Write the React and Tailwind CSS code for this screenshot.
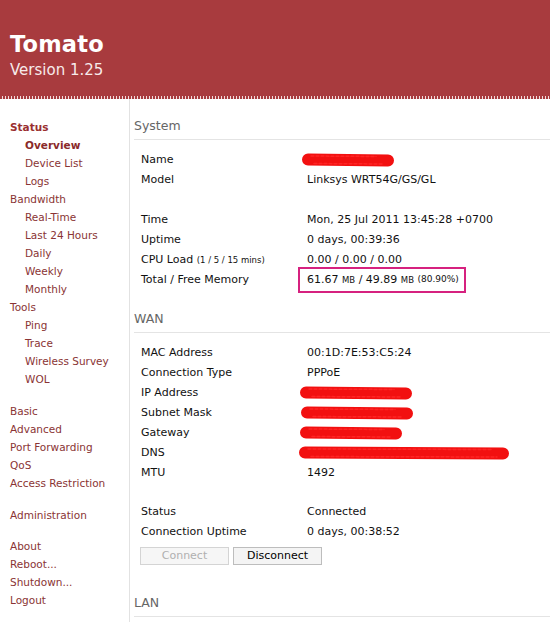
import React from "react";

const F = { fontFamily: '"DejaVu Sans", Verdana, sans-serif' };

function Redact({ w, dx = -6 }) {
  return (
    <svg width={w} height="14" viewBox={`0 0 ${w} 14`} style={{ marginLeft: dx }} className="block">
      <path d={`M6 6.5 L${w - 6} 7.5`} fill="none" stroke="#f21010" strokeWidth="12" strokeLinecap="round" />
      <path d={`M9 3 L${w - 18} 3.5 M12 10.5 L${w - 12} 11`} fill="none" stroke="#ff2424" strokeWidth="1.5" strokeLinecap="round" strokeDasharray="3 2" />
    </svg>
  );
}

function Row({ label, children }) {
  return (
    <div className="flex h-[20px] items-center">
      <div className="w-[166px] shrink-0">{label}</div>
      <div className="flex items-center">{children}</div>
    </div>
  );
}

function Heading({ children, className = "" }) {
  return (
    <div className={"border-b border-[#e4e4e4] pb-[5px] text-[12.5px] leading-[16px] text-[#666] " + className}>
      {children}
    </div>
  );
}

function SideLink({ children, sub, bold, active }) {
  return (
    <div
      className={
        "h-[18px] leading-[18px] " +
        (sub ? "pl-[15px] " : "") +
        (active ? "font-bold text-[#8a2a2a] " : bold ? "font-bold text-[#9a2f2f] " : "text-[#8a3434] ")
      }
    >
      {children}
    </div>
  );
}

export default function App() {
  return (
    <div className="w-[550px] h-[622px] overflow-hidden bg-white" style={F}>
      <div className="h-[96px] bg-[#a83b3e] pl-[10px] pt-[30px] text-white">
        <div className="text-[22.5px] font-bold leading-[28px] tracking-[0.2px]">Tomato</div>
        <div className="mt-[3px] text-[15px] leading-[18px] text-[#f7eaea]">Version 1.25</div>
      </div>
      <div className="h-[3px] bg-[repeating-linear-gradient(90deg,#a83b3e_0_2px,#f2dcdc_2px_3px)]" />
      <div className="flex">
        <div className="w-[130px] shrink-0 border-r border-[#e2e2e2] pl-[10px] pt-[19px] text-[10.5px] h-[523px]">
          <SideLink bold>Status</SideLink>
          <SideLink sub active>Overview</SideLink>
          <SideLink sub>Device List</SideLink>
          <SideLink sub>Logs</SideLink>
          <SideLink>Bandwidth</SideLink>
          <SideLink sub>Real-Time</SideLink>
          <SideLink sub>Last 24 Hours</SideLink>
          <SideLink sub>Daily</SideLink>
          <SideLink sub>Weekly</SideLink>
          <SideLink sub>Monthly</SideLink>
          <SideLink>Tools</SideLink>
          <SideLink sub>Ping</SideLink>
          <SideLink sub>Trace</SideLink>
          <SideLink sub>Wireless Survey</SideLink>
          <SideLink sub>WOL</SideLink>
          <div className="h-[14px]" />
          <SideLink>Basic</SideLink>
          <SideLink>Advanced</SideLink>
          <SideLink>Port Forwarding</SideLink>
          <SideLink>QoS</SideLink>
          <SideLink>Access Restriction</SideLink>
          <div className="h-[14px]" />
          <SideLink>Administration</SideLink>
          <div className="h-[13px]" />
          <SideLink>About</SideLink>
          <SideLink>Reboot...</SideLink>
          <SideLink>Shutdown...</SideLink>
          <SideLink>Logout</SideLink>
        </div>
        <div className="flex-1 pl-[4px] pt-[19px] text-[11px] text-[#111]">
          <Heading>System</Heading>
          <div className="pl-[7px] pt-[10px]">
            <Row label="Name"><Redact w={92} dx={-5} /></Row>
            <Row label="Model">Linksys WRT54G/GS/GL</Row>
            <div className="h-[20px]" />
            <Row label="Time">Mon, 25 Jul 2011 13:45:28 +0700</Row>
            <Row label="Uptime">0 days, 00:39:36</Row>
            <Row label={<span>CPU Load <span className="text-[8.5px]">(1 / 5 / 15 mins)</span></span>}>0.00 / 0.00 / 0.00</Row>
            <Row label="Total / Free Memory">
              <span className="-my-[3px] -ml-[9px] inline-flex h-[26px] items-center border-2 border-[#d6217f] pl-[7px] pr-[5px]">
                61.67&nbsp;<span className="text-[8.5px]">MB</span>&nbsp;/ 49.89&nbsp;<span className="text-[8.5px]">MB</span>&nbsp;<span className="text-[9px]">(80.90%)</span>
              </span>
            </Row>
          </div>
          <Heading className="mt-[21px]">WAN</Heading>
          <div className="pl-[7px] pt-[10px]">
            <Row label="MAC Address">00:1D:7E:53:C5:24</Row>
            <Row label="Connection Type">PPPoE</Row>
            <Row label="IP Address"><Redact w={112} dx={-7} /></Row>
            <Row label="Subnet Mask"><Redact w={112} dx={-6} /></Row>
            <Row label="Gateway"><Redact w={102} dx={-7} /></Row>
            <Row label="DNS"><Redact w={210} dx={-8} /></Row>
            <Row label="MTU">1492</Row>
            <div className="h-[19px]" />
            <Row label="Status">Connected</Row>
            <Row label="Connection Uptime">0 days, 00:38:52</Row>
            <div className="mt-[5px] flex gap-[4px] -ml-[1px]">
              <button className="h-[18px] w-[89px] border border-[#d4d4d4] bg-[#f6f6f6] text-[11px] leading-[16px] text-[#b0b0b0]" style={F}>Connect</button>
              <button className="h-[18px] w-[89px] border border-[#bdbdbd] bg-[#f4f4f4] text-[11px] leading-[16px] text-black" style={F}>Disconnect</button>
            </div>
          </div>
          <Heading className="mt-[30px]">LAN</Heading>
        </div>
      </div>
    </div>
  );
}
